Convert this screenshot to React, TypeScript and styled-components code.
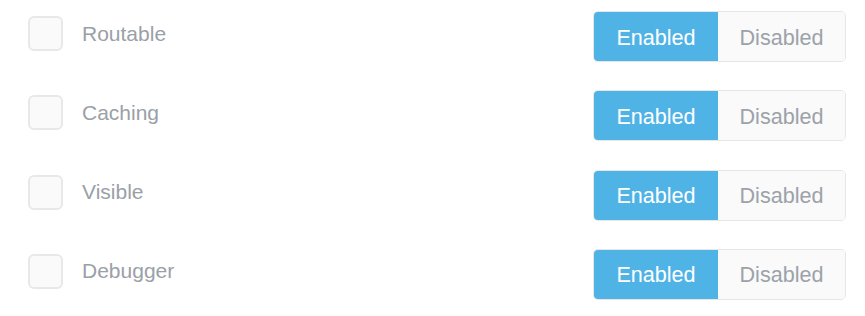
import React, { useState } from "react";
import styled, { createGlobalStyle } from "styled-components";

const Global = createGlobalStyle`
  html, body { margin: 0; padding: 0; background: #ffffff; }
  body { font-family: "Liberation Sans", Arial, sans-serif; }
`;

const List = styled.div`
  display: flex;
  flex-direction: column;
  padding: 11px 19px 0 28px;
  gap: 28.3px;
`;

const Row = styled.div`
  display: flex;
  justify-content: space-between;
  align-items: flex-start;
  height: 51px;
`;

const Left = styled.div`
  display: flex;
  align-items: center;
  gap: 19px;
  margin-top: 5px;
`;

const Box = styled.div`
  width: 35px;
  height: 35px;
  box-sizing: border-box;
  border: 2px solid #e8e8e8;
  border-radius: 6px;
  background: #fafafa;
`;

const Label = styled.span`
  font-size: 21px;
  color: #9aa0a7;
`;

const Toggle = styled.div`
  display: flex;
  width: 253px;
  height: 51px;
  box-sizing: border-box;
  border: 1px solid #e6e6e6;
  border-radius: 5px;
  overflow: hidden;
  background: #fafafa;
`;

const Seg = styled.button<{ $active: boolean; $w: number }>`
  all: unset;
  box-sizing: border-box;
  width: ${(p) => p.$w}px;
  display: flex;
  align-items: center;
  justify-content: center;
  font-family: "Liberation Sans", Arial, sans-serif;
  font-size: 21.6px;
  padding-top: 2px;
  color: ${(p) => (p.$active ? "#ffffff" : "#9ca2a9")};
  background: ${(p) => (p.$active ? "#4fb3e6" : "#fafafa")};
  cursor: pointer;
`;

const items = ["Routable", "Caching", "Visible", "Debugger"];

export default function App() {
  const [state, setState] = useState<Record<string, boolean>>(
    Object.fromEntries(items.map((i) => [i, true]))
  );
  return (
    <>
      <Global />
      <List>
        {items.map((name) => (
          <Row key={name}>
            <Left>
              <Box />
              <Label>{name}</Label>
            </Left>
            <Toggle>
              <Seg $w={124} $active={state[name]} onClick={() => setState({ ...state, [name]: true })}>
                Enabled
              </Seg>
              <Seg $w={127} $active={!state[name]} onClick={() => setState({ ...state, [name]: false })}>
                Disabled
              </Seg>
            </Toggle>
          </Row>
        ))}
      </List>
    </>
  );
}
